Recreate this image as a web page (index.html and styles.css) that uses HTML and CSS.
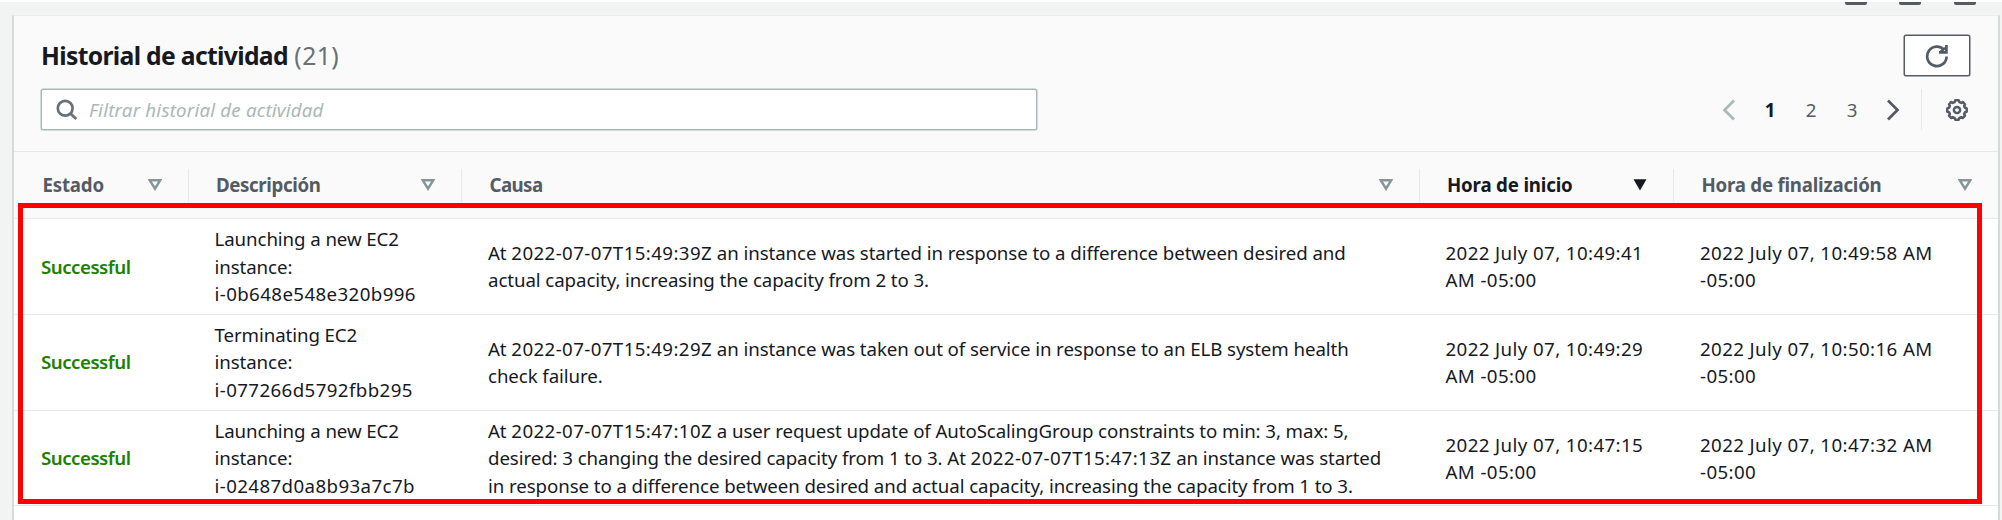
FILE: index.html
```html
<!DOCTYPE html>
<html lang="es">
<head>
<meta charset="utf-8">
<title>Historial de actividad</title>
<link rel="stylesheet" href="styles.css">
</head>
<body>
<div class="page">
  <div class="topbar"><i></i><i></i><i></i></div>
  <main class="card">
    <header class="card-head">
      <div class="title-row">
        <h2><span class="title">Historial de actividad</span> <span class="count">(21)</span></h2>
        <button class="refresh" aria-label="Actualizar">
          <svg width="24" height="24" viewBox="0 0 24 24" fill="none" stroke="#545b64" stroke-width="2.7"><path d="M21.6 12.4A9.7 9.7 0 1 1 19.3 6.1"/><path d="M21.4 1v7.3H14"/><path d="M15.500 7.600L20.800 3.600" stroke-width="2"/></svg>
        </button>
      </div>
      <div class="tool-row">
        <div class="search">
          <svg width="22" height="22" viewBox="0 0 22 22" fill="none" stroke="#687078" stroke-width="2.7"><circle cx="9.200" cy="9.200" r="7.400"/><path d="M14.400 14.400L20.300 20"/></svg>
          <span>Filtrar historial de actividad</span>
        </div>
        <nav class="pager">
          <span class="cell"><svg width="14" height="22" viewBox="0 0 14 22" fill="none" stroke="#aab7b8" stroke-width="2.7"><path d="M12 1.500L2.500 11L12 20.500"/></svg></span>
          <span class="cell current">1</span>
          <span class="cell">2</span>
          <span class="cell">3</span>
          <span class="cell"><svg width="14" height="22" viewBox="0 0 14 22" fill="none" stroke="#545b64" stroke-width="2.7"><path d="M2 1.500L11.500 11L2 20.500"/></svg></span>
        </nav>
        <span class="gear"><svg width="24" height="24" viewBox="-12 -12 24 24" fill="none" stroke="#545b64"><circle r="3.100" stroke-width="2.500"/><path stroke-width="2.500" stroke-linejoin="round" d="M-1.700 -9.700H1.700L2.500 -7.800L4.200 -7.100L5.700 -8L8 -5.700L7.100 -4.200L7.800 -2.500L9.700 -1.700V1.700L7.800 2.500L7.100 4.200L8 5.700L5.700 8L4.200 7.100L2.500 7.800L1.700 9.700H-1.700L-2.500 7.800L-4.200 7.100L-5.700 8L-8 5.700L-7.100 4.200L-7.800 2.500L-9.700 1.700V-1.700L-7.800 -2.500L-7.100 -4.200L-8 -5.700L-5.700 -8L-4.200 -7.100L-2.500 -7.800Z"/></svg></span>
      </div>
    </header>
    <div class="row head">
      <div class="th estado"><span>Estado</span><svg class="tri" viewBox="0 0 14 12"><path d="M1.800 1.300H12.200L7 9.700Z"/></svg></div>
      <div class="th descr"><span>Descripción</span><svg class="tri" viewBox="0 0 14 12"><path d="M1.800 1.300H12.200L7 9.700Z"/></svg></div>
      <div class="th causa"><span>Causa</span><svg class="tri" viewBox="0 0 14 12"><path d="M1.800 1.300H12.200L7 9.700Z"/></svg></div>
      <div class="th inicio"><span>Hora de inicio</span><svg class="tri full" viewBox="0 0 14 12"><path d="M.500 .300H13.500L7 11.500Z"/></svg></div>
      <div class="th final"><span>Hora de finalización</span><svg class="tri" viewBox="0 0 14 12"><path d="M1.800 1.300H12.200L7 9.700Z"/></svg></div>
    </div>
    <div class="row">
      <div class="td status">Successful</div>
      <div class="td desc">Launching a new EC2<br>instance:<br><span class="num">i-0b648e548e320b996</span></div>
      <div class="td cause"><p>At <span class="num">2022-07-07T15:49:39Z</span> an instance was started in response to a difference between desired and<br>actual capacity, increasing the capacity from 2 to 3.</p></div>
      <div class="td num">2022 July 07, 10:49:41<br>AM -05:00</div>
      <div class="td num">2022 July 07, 10:49:58 AM<br>-05:00</div>
    </div>
    <div class="row">
      <div class="td status">Successful</div>
      <div class="td desc">Terminating EC2<br>instance:<br><span class="num">i-077266d5792fbb295</span></div>
      <div class="td cause"><p>At <span class="num">2022-07-07T15:49:29Z</span> an instance was taken out of service in response to an ELB system health<br>check failure.</p></div>
      <div class="td num">2022 July 07, 10:49:29<br>AM -05:00</div>
      <div class="td num">2022 July 07, 10:50:16 AM<br>-05:00</div>
    </div>
    <div class="row">
      <div class="td status">Successful</div>
      <div class="td desc">Launching a new EC2<br>instance:<br><span class="num">i-02487d0a8b93a7c7b</span></div>
      <div class="td cause"><p>At <span class="num">2022-07-07T15:47:10Z</span> a user request update of AutoScalingGroup constraints to min: 3, max: 5,<br>desired: 3 changing the desired capacity from 1 to 3. At <span class="num">2022-07-07T15:47:13Z</span> an instance was started<br>in response to a difference between desired and actual capacity, increasing the capacity from 1 to 3.</p></div>
      <div class="td num">2022 July 07, 10:47:15<br>AM -05:00</div>
      <div class="td num">2022 July 07, 10:47:32 AM<br>-05:00</div>
    </div>
  </main>
  <div class="highlight"></div>
</div>
</body>
</html>
```
FILE: styles.css
```css
* { box-sizing: border-box; }
body {
  margin: 0;
  background: #f2f3f3;
  color: #16191f;
  font: 18.7px/27.33px "Noto Sans", "Open Sans", sans-serif;
}
.page {
  position: relative;
  height: 520px;
  overflow: hidden;
  border-top: 2px solid #fff;
}
.topbar {
  display: flex;
  justify-content: flex-end;
  gap: 32.5px;
  height: 13px;
  padding-right: 26.5px;
}
.topbar i {
  width: 22px;
  height: 2.5px;
  background: #545b64;
  border-radius: 0 0 2px 2px;
}
.card {
  width: 1988px;
  height: 520px;
  margin-left: 12px;
  background: #fff;
  border: 2px solid #d5dbdb;
  border-top: 1px solid #eaeded;
}
.card-head {
  height: 136px;
  padding: 19px 28px 0 27px;
  background: #fafafa;
  border-bottom: 1px solid #e6e9e9;
}
.title-row, .tool-row {
  display: flex;
  align-items: center;
  height: 41px;
}
.title-row { justify-content: space-between; }
.tool-row { margin-top: 13px; padding-right: 1.5px; }
h2 {
  margin: 0;
  font-size: 24.7px;
  line-height: 34px;
  font-weight: 700;
  white-space: nowrap;
}
.title { letter-spacing: -.67px; }
.count { color: #687078; font-weight: 400; letter-spacing: .4px; }
.refresh {
  display: flex;
  align-items: center;
  justify-content: center;
  width: 66px;
  height: 41px;
  padding: 0;
  background: #fff;
  border: 1px solid #545b64;
  box-shadow: 0 0 0 .5px #545b64;
  border-radius: 2px;
}
.search {
  display: flex;
  align-items: center;
  gap: 11.5px;
  width: 996px;
  height: 41px;
  padding-left: 13.5px;
  background: #fff;
  border: 1px solid #aab7b8;
  box-shadow: 0 0 0 .5px #aab7b8;
  border-radius: 2px;
  color: #aab7b8;
  font-style: italic;
  letter-spacing: .2px;
}
.pager {
  display: flex;
  margin-left: auto;
  padding-right: 7px;
  color: #545b64;
}
.cell {
  display: flex;
  align-items: center;
  justify-content: center;
  width: 41px;
  height: 41px;
}
.current { color: #16191f; font-weight: 700; }
.gear {
  display: flex;
  align-items: center;
  justify-content: flex-end;
  width: 48px;
  height: 41px;
  border-left: 1px solid #e6e9e9;
}
.row {
  display: grid;
  grid-template-columns: 173.500px 273.500px 957.500px 254.500px 1fr;
  height: 95.75px;
  border-bottom: 1px solid #e6e9e9;
}
.row.head {
  height: 67px;
  padding-top: 17px;
  background: #fafafa;
}
.th {
  display: flex;
  align-items: center;
  justify-content: space-between;
  height: 33px;
  padding: 0 26px 1px 27.500px;
  border-left: 1px solid #e6e9e9;
  color: #545b64;
  font-weight: 700;
}
.th:first-child { padding-left: 28.5px; border-left: 0; }
.estado { letter-spacing: -.2px; }
.descr { letter-spacing: -.38px; }
.causa { letter-spacing: -.58px; }
.inicio { letter-spacing: -.18px; color: #16191f; }
.final { letter-spacing: -.23px; }
.tri {
  width: 14px;
  height: 12px;
  fill: none;
  stroke: #879596;
  stroke-width: 2.500px;
}
.tri.full { fill: #16191f; stroke: none; }
.td {
  align-self: center;
  padding-left: 27px;
  white-space: nowrap;
}
.td p { margin: 0; }
.status { color: #1d8102; font-weight: 600; letter-spacing: -.5px; }
.desc { letter-spacing: -.09px; }
.cause { letter-spacing: -.085px; }
.num { letter-spacing: .4px; }
.highlight {
  position: absolute;
  left: 18px;
  top: 201px;
  width: 1964px;
  height: 301px;
  border: 5px solid #f00;
}
```
